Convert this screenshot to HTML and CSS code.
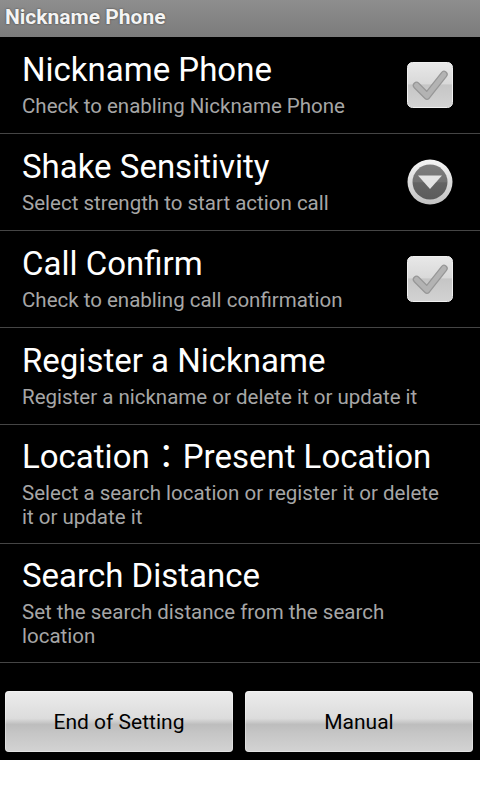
FILE: index.html
```html
<!DOCTYPE html>
<html lang="en">
<head>
<meta charset="utf-8">
<title>Nickname Phone</title>
<link rel="stylesheet" href="styles.css">
</head>
<body>
<div class="screen">
  <header class="titlebar">Nickname Phone</header>
  <ul class="prefs">
    <li class="pref">
      <div class="pref-text">
        <div class="pref-title">Nickname Phone</div>
        <div class="pref-summary">Check to enabling Nickname Phone</div>
      </div>
      <svg class="widget" viewBox="0 0 46 46" width="46" height="46">
        <defs>
          <linearGradient id="cbg1" x1="0" y1="0" x2="0" y2="1">
            <stop offset="0" stop-color="#e8e8e8"/>
            <stop offset="0.47" stop-color="#d9d9d9"/>
            <stop offset="0.5" stop-color="#c6c6c6"/>
            <stop offset="1" stop-color="#d2d2d2"/>
          </linearGradient>
        </defs>
        <rect x="0.5" y="0.5" width="45" height="45" rx="5" fill="url(#cbg1)" stroke="#efefef" stroke-width="1"/>
        <path d="M9.5 23.5 L20 34 L37 12.5" fill="none" stroke="#979797" stroke-width="7.5" stroke-linecap="round" stroke-linejoin="round"/>
        <path d="M9.5 23.5 L20 34 L37 12.5" fill="none" stroke="#b3b3b3" stroke-width="5" stroke-linecap="round" stroke-linejoin="round"/>
      </svg>
    </li>
    <li class="pref">
      <div class="pref-text">
        <div class="pref-title">Shake Sensitivity</div>
        <div class="pref-summary">Select strength to start action call</div>
      </div>
      <svg class="widget" viewBox="0 0 46 46" width="46" height="46">
        <defs>
          <linearGradient id="ring" x1="0" y1="0" x2="0" y2="1">
            <stop offset="0" stop-color="#f6f6f6"/>
            <stop offset="1" stop-color="#c2c2c2"/>
          </linearGradient>
          <linearGradient id="knob" x1="0" y1="0" x2="0" y2="1">
            <stop offset="0" stop-color="#7e7e7e"/>
            <stop offset="0.5" stop-color="#727272"/>
            <stop offset="0.52" stop-color="#646464"/>
            <stop offset="1" stop-color="#5c5c5c"/>
          </linearGradient>
        </defs>
        <circle cx="23" cy="23" r="22.5" fill="url(#ring)"/>
        <circle cx="23" cy="23" r="17.5" fill="url(#knob)"/>
        <path d="M11 16.5 L35 16.5 L23 30 Z" fill="#e4e4e4"/>
      </svg>
    </li>
    <li class="pref">
      <div class="pref-text">
        <div class="pref-title">Call Confirm</div>
        <div class="pref-summary">Check to enabling call confirmation</div>
      </div>
      <svg class="widget" viewBox="0 0 46 46" width="46" height="46">
        <defs>
          <linearGradient id="cbg2" x1="0" y1="0" x2="0" y2="1">
            <stop offset="0" stop-color="#e8e8e8"/>
            <stop offset="0.47" stop-color="#d9d9d9"/>
            <stop offset="0.5" stop-color="#c6c6c6"/>
            <stop offset="1" stop-color="#d2d2d2"/>
          </linearGradient>
        </defs>
        <rect x="0.5" y="0.5" width="45" height="45" rx="5" fill="url(#cbg2)" stroke="#efefef" stroke-width="1"/>
        <path d="M9.5 23.5 L20 34 L37 12.5" fill="none" stroke="#979797" stroke-width="7.5" stroke-linecap="round" stroke-linejoin="round"/>
        <path d="M9.5 23.5 L20 34 L37 12.5" fill="none" stroke="#b3b3b3" stroke-width="5" stroke-linecap="round" stroke-linejoin="round"/>
      </svg>
    </li>
    <li class="pref">
      <div class="pref-text">
        <div class="pref-title">Register a Nickname</div>
        <div class="pref-summary">Register a nickname or delete it or update it</div>
      </div>
    </li>
    <li class="pref">
      <div class="pref-text">
        <div class="pref-title">Location：Present Location</div>
        <div class="pref-summary">Select a search location or register it or delete it or update it</div>
      </div>
    </li>
    <li class="pref">
      <div class="pref-text">
        <div class="pref-title">Search Distance</div>
        <div class="pref-summary">Set the search distance from the search location</div>
      </div>
    </li>
  </ul>
  <footer class="actions">
    <button class="btn" type="button">End of Setting</button>
    <button class="btn" type="button">Manual</button>
  </footer>
</div>
</body>
</html>
```
FILE: styles.css
```css
html, body {
  margin: 0;
  padding: 0;
  background: #ffffff;
}
body {
  width: 480px;
  height: 800px;
  overflow: hidden;
  font-family: Roboto, "Noto Sans CJK JP", sans-serif;
}
.screen {
  width: 480px;
  height: 760px;
  background: #000000;
  display: flex;
  flex-direction: column;
}
.titlebar {
  height: 37px;
  box-sizing: border-box;
  padding: 4px 0 0 5px;
  background: linear-gradient(#8e8e8e, #7b7b7b);
  color: #f4f4f4;
  font-size: 21px;
  font-weight: bold;
  line-height: 26px;
  text-shadow: 0 0 2px rgba(0,0,0,0.6);
}
.prefs {
  list-style: none;
  margin: 0;
  padding: 0;
}
.pref {
  display: flex;
  align-items: center;
  min-height: 97px;
  box-sizing: border-box;
  border-bottom: 1px solid #454545;
  padding: 0 27px 0 22px;
}
.pref-text {
  flex: 1;
  padding: 12px 0 14px;
}
.pref-title {
  color: #ffffff;
  font-size: 33px;
  line-height: 40px;
}
.pref-summary {
  color: #a6a6a6;
  font-size: 20.5px;
  line-height: 24px;
  margin-top: 4px;
}
.widget {
  flex: none;
  margin-left: 10px;
}
.actions {
  display: flex;
  gap: 12px;
  padding: 28px 7px 0 5px;
}
.btn {
  flex: 1;
  height: 61px;
  border: none;
  border-radius: 4px;
  background: linear-gradient(#ececec 0%, #dcdcdc 45%, #bdbdbd 55%, #c6c6c6 70%, #d3d3d3 100%);
  box-shadow: inset 0 0 0 1px rgba(255,255,255,0.35);
  color: #000000;
  font-family: Roboto, sans-serif;
  font-size: 21px;
  padding: 0;
}
```
